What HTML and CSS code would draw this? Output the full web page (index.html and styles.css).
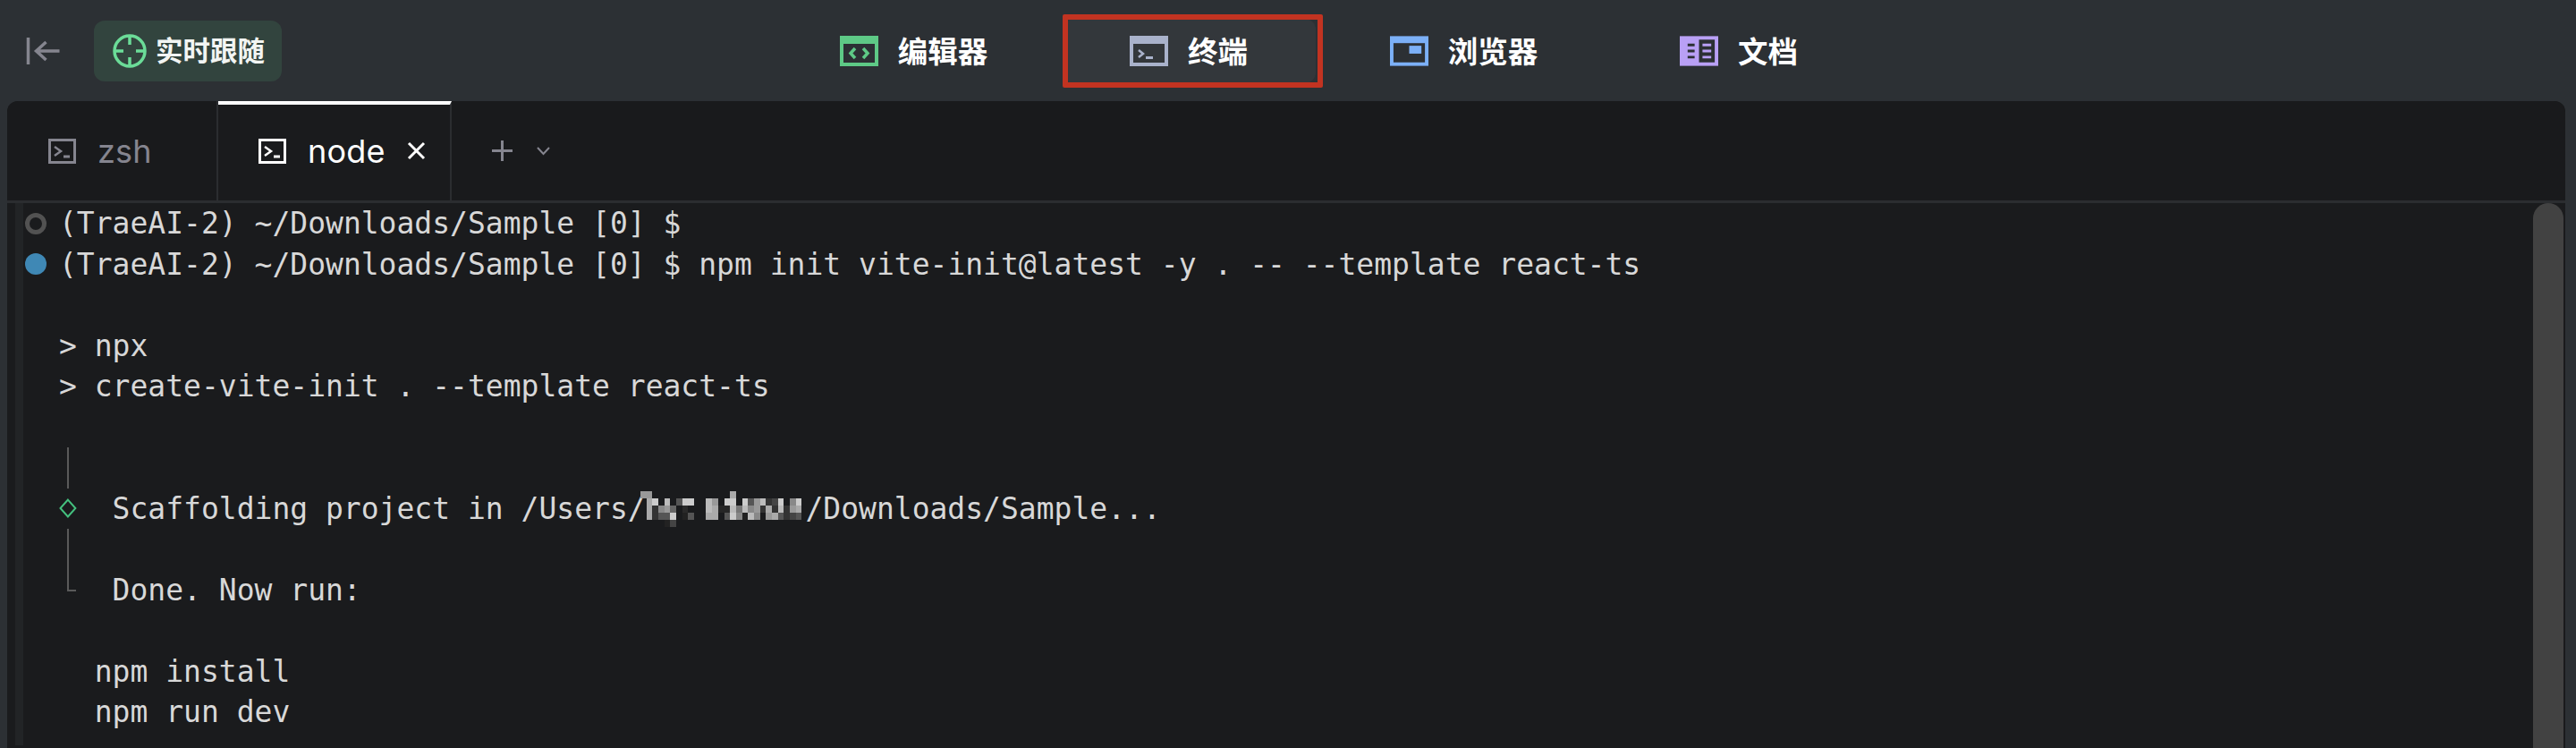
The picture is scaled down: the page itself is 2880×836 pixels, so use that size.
FILE: index.html
```html
<!DOCTYPE html>
<html lang="zh-CN">
<head>
<meta charset="utf-8">
<title>终端</title>
<link rel="stylesheet" href="styles.css">
</head>
<body>
<header class="topbar">
  <svg class="collapse" viewBox="0 0 37 30" fill="none" stroke="currentColor" stroke-width="3.5"><path d="M2 0v30"/><path d="M37 15H11M22 5 11 15l11 10"/></svg>
  <div class="follow">
    <svg class="follow-icon" viewBox="0 0 38 38" fill="none" stroke="currentColor" stroke-width="3.500"><circle cx="19" cy="19" r="17"/><path d="M19 2v10M19 26v10M2 19h10M26 19h10"/></svg>
    <span class="label">实时跟随</span>
  </div>
  <nav class="nav">
    <div class="nav-item">
      <svg class="nav-icon green" viewBox="0 0 43 34"><rect width="43" height="34" fill="currentColor"/><rect x="4" y="9" width="35" height="21" fill="#2c3034"/><path d="M17 14l-5 5.500 5 5.500M26 14l5 5.500-5 5.500" fill="none" stroke="currentColor" stroke-width="3.500"/></svg>
      <span class="label">编辑器</span>
    </div>
    <div class="nav-item active">
      <svg class="nav-icon slate" viewBox="0 0 43 34"><rect width="43" height="34" fill="currentColor"/><rect x="4" y="9" width="35" height="21" fill="#33373b"/><path d="M10 16l5 4-5 4" fill="none" stroke="currentColor" stroke-width="2.500"/><rect x="18" y="23" width="8" height="3" fill="currentColor"/></svg>
      <span class="label">终端</span>
      <div class="highlight"></div>
    </div>
    <div class="nav-item">
      <svg class="nav-icon blue" viewBox="0 0 44 34"><rect width="44" height="34" fill="currentColor"/><rect x="4" y="8" width="36" height="22" fill="#2c3034"/><rect x="22" y="11" width="14" height="9" fill="currentColor"/></svg>
      <span class="label">浏览器</span>
    </div>
    <div class="nav-item">
      <svg class="nav-icon purple" viewBox="0 0 44 34"><rect width="44" height="34" fill="currentColor"/><rect x="22" y="4" width="18" height="26" fill="#2c3034"/><path d="M9 10h8M9 17h8M9 24h8" stroke="#2c3034" stroke-width="3"/><path d="M26 10h10M26 17h10M26 24h10" stroke="currentColor" stroke-width="3"/></svg>
      <span class="label">文档</span>
    </div>
  </nav>
</header>
<main class="panel">
  <div class="tabs">
    <div class="tab tab-zsh">
      <svg class="tab-icon" viewBox="0 0 31 28" fill="none" stroke="currentColor" stroke-width="3"><rect x="1.500" y="1.500" width="28" height="25"/><path d="M7 9l7 5-7 5" stroke-width="2.500"/><path d="M17 20h7" stroke-width="3"/></svg>
      <span>zsh</span>
    </div>
    <div class="tab tab-node">
      <svg class="tab-icon" viewBox="0 0 31 28" fill="none" stroke="currentColor" stroke-width="3"><rect x="1.500" y="1.500" width="28" height="25"/><path d="M7 9l7 5-7 5" stroke-width="2.500"/><path d="M17 20h7" stroke-width="3"/></svg>
      <span>node</span>
      <svg class="tab-close" viewBox="0 0 21 21" fill="none" stroke="currentColor" stroke-width="3"><path d="M2 2l17 17M19 2 2 19"/></svg>
    </div>
    <div class="tab-actions">
      <svg class="tab-add" viewBox="0 0 23 23" fill="none" stroke="currentColor" stroke-width="3"><path d="M11.500 0v23M0 11.500h23"/></svg>
      <svg class="tab-more" viewBox="0 0 15 10" fill="none" stroke="currentColor" stroke-width="2"><path d="M1 1l6.500 7L14 1"/></svg>
    </div>
  </div>
  <div class="term">
    <div class="row"><span class="mark"><i class="dot dot-idle"></i></span><span class="text">(TraeAI-2) ~/Downloads/Sample [0] $</span></div>
    <div class="row"><span class="mark"><i class="dot dot-run"></i></span><span class="text">(TraeAI-2) ~/Downloads/Sample [0] $ npm init vite-init@latest -y . -- --template react-ts</span></div>
    <div class="row"></div>
    <div class="row"><span class="mark"></span><span class="text">&gt; npx</span></div>
    <div class="row"><span class="mark"></span><span class="text">&gt; create-vite-init . --template react-ts</span></div>
    <div class="row"></div>
    <div class="row"><span class="mark"></span><span class="rail"><i class="rail-line"></i></span></div>
    <div class="row"><span class="mark"></span><span class="rail"><svg class="diamond" viewBox="0 0 20 22" fill="none" stroke="currentColor" stroke-width="2"><path d="M10 1.500 18.500 11 10 20.500 1.500 11z"/></svg></span><span class="text">  Scaffolding project in /Users/<span class="redacted"><svg class="mosaic" viewBox="0 0 28 5" preserveAspectRatio="none" shape-rendering="crispEdges">
      <g fill="#999"><rect x="0" y="0" width="2" height="1"/></g>
      <rect x="15" y="0" width="1" height="1" fill="#aaa"/>
      <rect x="1" y="1" width="1" height="3" fill="#aaa"/>
      <rect x="2" y="1" width="1" height="1" fill="#ccc"/><rect x="4" y="1" width="1" height="1" fill="#bbb"/><rect x="6" y="1" width="1" height="1" fill="#555"/><rect x="7" y="1" width="2" height="1" fill="#ccc"/><rect x="11" y="1" width="1" height="1" fill="#bbb"/><rect x="12" y="1" width="1" height="1" fill="#999"/><rect x="14" y="1" width="2" height="1" fill="#ccc"/><rect x="17" y="1" width="1" height="1" fill="#ccc"/><rect x="18" y="1" width="1" height="1" fill="#555"/><rect x="19" y="1" width="1" height="1" fill="#999"/><rect x="20" y="1" width="1" height="1" fill="#bbb"/><rect x="21" y="1" width="1" height="1" fill="#333"/><rect x="22" y="1" width="1" height="1" fill="#444"/><rect x="23" y="1" width="1" height="1" fill="#ccc"/><rect x="25" y="1" width="1" height="1" fill="#888"/><rect x="26" y="1" width="1" height="1" fill="#ccc"/>
      <rect x="2" y="2" width="1" height="1" fill="#333"/><rect x="3" y="2" width="1" height="1" fill="#888"/><rect x="4" y="2" width="1" height="1" fill="#999"/><rect x="5" y="2" width="1" height="1" fill="#666"/><rect x="7" y="2" width="1" height="1" fill="#2a2a2a"/><rect x="11" y="2" width="1" height="1" fill="#bbb"/><rect x="12" y="2" width="1" height="1" fill="#aaa"/><rect x="13" y="2" width="2" height="1" fill="#262626"/><rect x="15" y="2" width="1" height="1" fill="#bbb"/><rect x="16" y="2" width="1" height="1" fill="#777"/><rect x="17" y="2" width="1" height="1" fill="#bbb"/><rect x="18" y="2" width="1" height="1" fill="#888"/><rect x="19" y="2" width="1" height="1" fill="#999"/><rect x="20" y="2" width="1" height="1" fill="#333"/><rect x="21" y="2" width="1" height="1" fill="#aaa"/><rect x="22" y="2" width="1" height="1" fill="#333"/><rect x="23" y="2" width="1" height="1" fill="#bbb"/><rect x="24" y="2" width="1" height="1" fill="#333"/><rect x="25" y="2" width="1" height="1" fill="#999"/><rect x="26" y="2" width="1" height="1" fill="#aaa"/>
      <rect x="2" y="3" width="1" height="1" fill="#333"/><rect x="3" y="3" width="2" height="1" fill="#555"/><rect x="5" y="3" width="1" height="1" fill="#ccc"/><rect x="7" y="3" width="1" height="1" fill="#222"/><rect x="8" y="3" width="1" height="1" fill="#555"/><rect x="11" y="3" width="2" height="1" fill="#aaa"/><rect x="14" y="3" width="1" height="1" fill="#555"/><rect x="15" y="3" width="1" height="1" fill="#ccc"/><rect x="16" y="3" width="1" height="1" fill="#888"/><rect x="17" y="3" width="1" height="1" fill="#222"/><rect x="18" y="3" width="1" height="1" fill="#bbb"/><rect x="19" y="3" width="1" height="1" fill="#888"/><rect x="21" y="3" width="1" height="1" fill="#999"/><rect x="22" y="3" width="1" height="1" fill="#aaa"/><rect x="23" y="3" width="1" height="1" fill="#555"/><rect x="24" y="3" width="1" height="1" fill="#333"/><rect x="25" y="3" width="1" height="1" fill="#444"/><rect x="26" y="3" width="1" height="1" fill="#555"/>
      <rect x="4" y="4" width="1" height="1" fill="#222"/><rect x="5" y="4" width="1" height="1" fill="#444"/>
    </svg></span>/Downloads/Sample...</span></div>
    <div class="row"><span class="mark"></span><span class="rail"><i class="rail-line"></i></span></div>
    <div class="row"><span class="mark"></span><span class="rail"><i class="rail-end"></i></span><span class="text">  Done. Now run:</span></div>
    <div class="row"></div>
    <div class="row"><span class="mark"></span><span class="text">  npm install</span></div>
    <div class="row"><span class="mark"></span><span class="text">  npm run dev</span></div>
    <div class="scrollbar"></div>
  </div>
</main>
</body>
</html>
```

FILE: styles.css
```css
* { box-sizing: border-box; }

html, body {
  margin: 0;
  height: 836px;
  overflow: hidden;
  background: #2c3034;
}

body {
  color: #fff;
  font-family: "Noto Sans CJK SC", "Noto Sans", sans-serif;
}

.topbar {
  display: flex;
  align-items: center;
  height: 113px;
  padding-left: 29px;
}

.collapse {
  width: 38px;
  height: 30px;
  color: #85858f;
  flex: none;
}

.follow {
  display: flex;
  align-items: center;
  gap: 10px;
  width: 210px;
  height: 68px;
  margin-left: 38px;
  padding-left: 21px;
  border-radius: 12px;
  background: #32443e;
  font-size: 30.500px;
  font-weight: 700;
  flex: none;
  color: #f2f5f3;
}

.follow-icon {
  width: 38px;
  height: 38px;
  color: #6bdc98;
  flex: none;
}

.label {
  padding-bottom: 3px;
}

.nav {
  display: flex;
  gap: 24.500px;
  margin-left: 565px;
}

.nav-item {
  position: relative;
  display: flex;
  align-items: center;
  justify-content: center;
  gap: 22px;
  width: 283px;
  height: 72px;
  border-radius: 12px;
  font-size: 33.500px;
  font-weight: 700;
}

.nav-item.active {
  background: #33373b;
}

.highlight {
  position: absolute;
  top: -5px;
  bottom: -5px;
  left: 0;
  right: -8px;
  border: 6px solid #c23321;
  border-radius: 2px;
}

.nav-icon {
  width: 43px;
  height: 34px;
  flex: none;
}

.green { color: #5ec986; }
.slate { color: #a9b2cb; }
.blue { color: #7cb0f7; }
.purple { color: #b9a0f5; }

.panel {
  margin: 0 12px 0 8px;
  height: 723px;
  border-radius: 12px 12px 0 0;
  background: #1a1b1d;
  overflow: hidden;
}

.tabs {
  display: flex;
  align-items: stretch;
  height: 114px;
  border-bottom: 3px solid #2b2d30;
  background: #191a1c;
}

.tab {
  display: flex;
  align-items: center;
  font-family: "Inter", "Noto Sans", sans-serif;
  font-size: 36px;
  letter-spacing: 0.2px;
  border-right: 2px solid #2b2d30;
}

.tab-zsh {
  width: 236px;
  gap: 24px;
  padding-left: 46px;
  color: #85858f;
}

.tab-node {
  width: 261px;
  gap: 24px;
  padding-left: 45px;
  padding-bottom: 4px;
  border-top: 4px solid #fff;
  background: #1a1b1d;
  color: #fff;
}

.tab-icon {
  width: 31px;
  height: 28px;
  flex: none;
}

.tab-close {
  width: 21px;
  height: 21px;
  flex: none;
}

.tab-actions {
  display: flex;
  align-items: center;
  gap: 27px;
  padding-left: 45px;
  color: #85858f;
}

.tab-add { width: 23px; height: 23px; }
.tab-more { width: 15px; height: 10px; }

.term {
  position: relative;
  height: 606px;
  margin-left: 9px;
  border-left: 9px solid #222426;
  font-family: "DejaVu Sans Mono", monospace;
  font-size: 33px;
  color: #d8d8d8;
}

.row {
  display: flex;
  align-items: stretch;
  height: 45.500px;
  line-height: 45.500px;
  white-space: pre;
}

.mark {
  display: flex;
  align-items: center;
  width: 40px;
  padding-left: 2px;
  flex: none;
}

.dot {
  display: block;
  width: 24px;
  height: 24px;
  border-radius: 50%;
}

.dot-idle { border: 5px solid #525252; }
.dot-run { background: #3f88b5; }

.rail {
  display: flex;
  justify-content: center;
  align-items: center;
  width: 1ch;
  flex: none;
  color: #44c07e;
}

.rail-line {
  display: block;
  width: 2px;
  height: 100%;
  background: #5a5a5a;
}

.rail-end {
  display: block;
  align-self: flex-start;
  width: 10px;
  height: 24px;
  margin-left: 8px;
  border-left: 2px solid #5a5a5a;
  border-bottom: 2px solid #5a5a5a;
}

.diamond {
  width: 20px;
  height: 22px;
}

.redacted {
  position: relative;
  display: inline-block;
  width: 9ch;
  height: 1em;
}

.mosaic {
  position: absolute;
  left: -6px;
  top: 2px;
  width: 187px;
  height: 40px;
  filter: blur(0.6px);
}

.scrollbar {
  position: absolute;
  top: 0;
  right: 2px;
  width: 34px;
  height: 640px;
  border-radius: 17px;
  background: #424242;
}
```
